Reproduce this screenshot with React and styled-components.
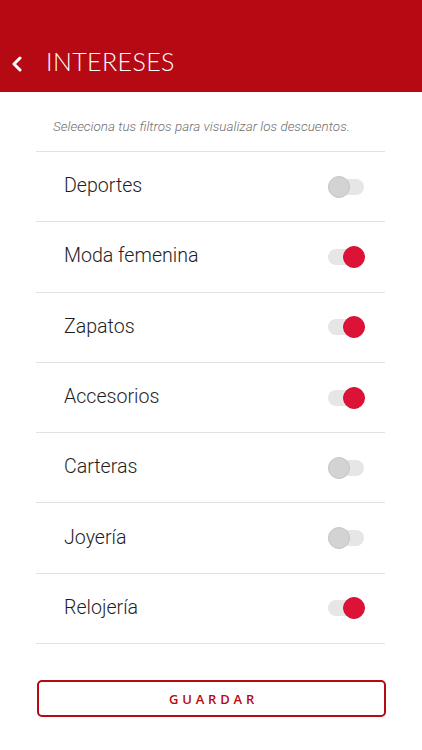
import React, { useState } from "react";
import styled, { createGlobalStyle } from "styled-components";

const GlobalStyle = createGlobalStyle`
  html, body {
    margin: 0;
    padding: 0;
    background: #ffffff;
  }
  * {
    box-sizing: border-box;
  }
`;

const Screen = styled.div`
  width: 422px;
  height: 750px;
  background: #ffffff;
  display: flex;
  flex-direction: column;
  overflow: hidden;
`;

const Header = styled.header`
  height: 92px;
  background: #b50a14;
  display: flex;
  align-items: flex-end;
  padding: 0 0 16px 11px;
`;

const BackButton = styled.button`
  border: none;
  background: none;
  padding: 0;
  width: 14px;
  height: 24px;
  display: flex;
  align-items: center;
  color: #ffffff;
  cursor: pointer;
`;

const Title = styled.h1`
  margin: 0 0 0 21px;
  font-family: Lato, "Open Sans", sans-serif;
  font-weight: 300;
  font-size: 25px;
  letter-spacing: 0.4px;
  color: #ffffff;
  line-height: 30px;
`;

const Content = styled.div`
  margin: 0 37px 0 36px;
  display: flex;
  flex-direction: column;
`;

const Hint = styled.p`
  margin: 0;
  height: 60px;
  padding: 27px 0 0 17px;
  font-family: Roboto, "Liberation Sans", sans-serif;
  font-style: italic;
  font-weight: 300;
  font-size: 13.45px;
  line-height: 16px;
  color: #6f6f6f;
  border-bottom: 1px solid #e2e2e2;
`;

const List = styled.ul`
  list-style: none;
  margin: 0;
  padding: 0;
`;

const Row = styled.li`
  height: 70.3px;
  display: flex;
  align-items: center;
  justify-content: space-between;
  padding: 0 21px 2px 28px;
  border-bottom: 1px solid #e2e2e2;
`;

const Label = styled.span`
  font-family: Roboto, "Liberation Sans", sans-serif;
  font-weight: 300;
  font-size: 19.6px;
  color: #1e1e1e;
`;

const Track = styled.button`
  position: relative;
  top: 1px;
  width: 36px;
  height: 16px;
  border: none;
  padding: 0;
  border-radius: 8px;
  background: #e6e6e6;
  cursor: pointer;
`;

const Thumb = styled.span`
  position: absolute;
  top: -3px;
  left: ${({ $on }) => ($on ? "15px" : "0")};
  width: 22px;
  height: 22px;
  border-radius: 50%;
  background: ${({ $on }) => ($on ? "#dc1237" : "#d3d3d3")};
  border: 1px solid ${({ $on }) => ($on ? "#d41033" : "#c6c6c6")};
`;

const SaveButton = styled.button`
  margin: 36px 36px 0 37px;
  height: 37px;
  border: 2px solid #b50a14;
  border-radius: 5px;
  background: #ffffff;
  font-family: "Open Sans", Lato, sans-serif;
  font-weight: 600;
  font-size: 13px;
  letter-spacing: 3.8px;
  color: #b50a14;
  padding: 0 0 0 4px;
  cursor: pointer;
`;

const Toggle = ({ on, onClick }) => (
  <Track onClick={onClick} aria-pressed={on}>
    <Thumb $on={on} />
  </Track>
);

const initial = [
  { label: "Deportes", on: false },
  { label: "Moda femenina", on: true },
  { label: "Zapatos", on: true },
  { label: "Accesorios", on: true },
  { label: "Carteras", on: false },
  { label: "Joyería", on: false },
  { label: "Relojería", on: true },
];

export default function App() {
  const [items, setItems] = useState(initial);

  const flip = (i) =>
    setItems((prev) => prev.map((it, j) => (j === i ? { ...it, on: !it.on } : it)));

  return (
    <>
      <GlobalStyle />
      <Screen>
        <Header>
          <BackButton aria-label="Volver">
            <svg width="12" height="16" viewBox="0 0 12 16">
              <path d="M9 2 L3 8 L9 14" fill="none" stroke="#fff" strokeWidth="3" strokeLinecap="round" strokeLinejoin="round" />
            </svg>
          </BackButton>
          <Title>INTERESES</Title>
        </Header>
        <Content>
          <Hint>Seleeciona tus filtros para visualizar los descuentos.</Hint>
          <List>
            {items.map((it, i) => (
              <Row key={it.label}>
                <Label>{it.label}</Label>
                <Toggle on={it.on} onClick={() => flip(i)} />
              </Row>
            ))}
          </List>
        </Content>
        <SaveButton>GUARDAR</SaveButton>
      </Screen>
    </>
  );
}
